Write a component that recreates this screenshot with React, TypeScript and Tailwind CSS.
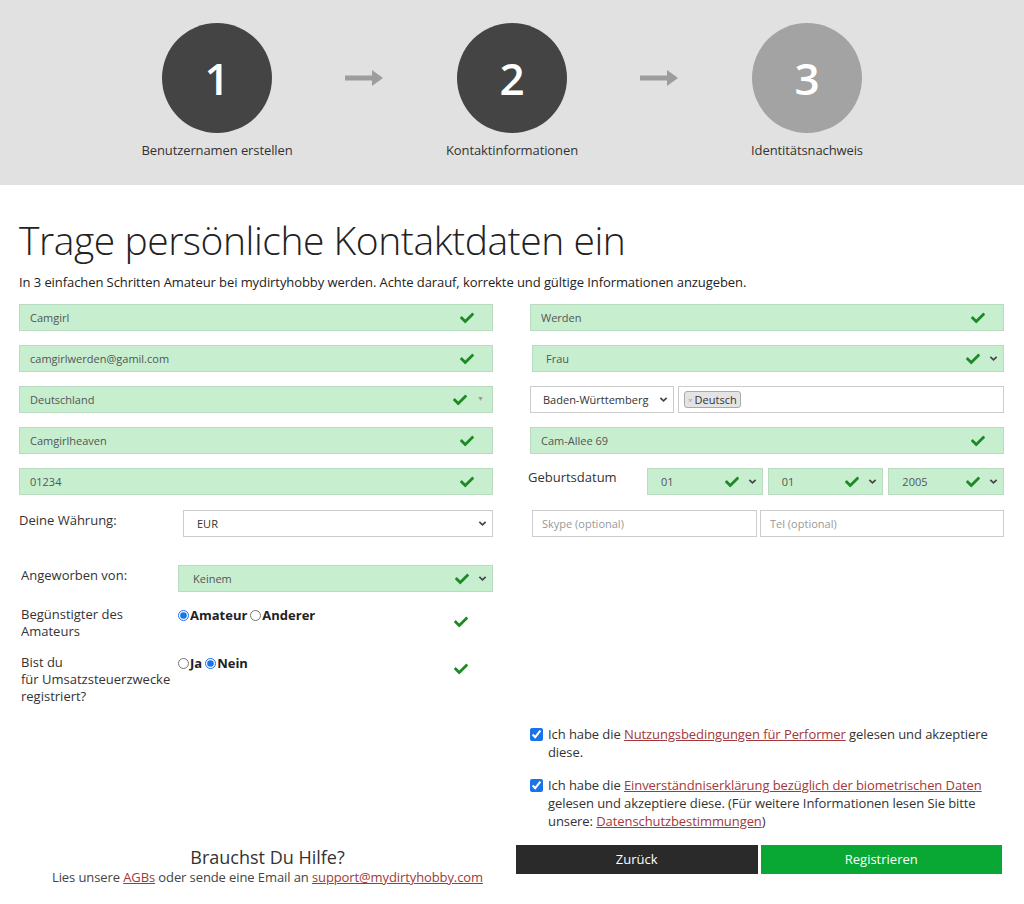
import React from 'react';

const Check = ({ className = '' }: { className?: string }) => (
  <svg viewBox="0 0 512 512" className={`w-[14px] h-[14px] ${className}`} fill="#1d8a24">
    <path d="M173.9 439.4 7.5 273c-10-10-10-26.2 0-36.2l36.2-36.2c10-10 26.2-10 36.2 0L192 312.7 432.1 72.6c10-10 26.2-10 36.2 0l36.2 36.2c10 10 10 26.2 0 36.2L210.1 439.4c-10 10-26.2 10-36.2 0z" />
  </svg>
);

const Chevron = ({ className = '' }: { className?: string }) => (
  <svg viewBox="0 0 10 10" className={`w-[9px] h-[9px] ${className}`} fill="none" stroke="#444" strokeWidth={1.8}>
    <path d="M1.5 3.2 5 6.6 8.5 3.2" />
  </svg>
);

const Arrow = () => (
  <svg width="40" height="18" viewBox="0 0 40 18">
    <rect x="0" y="6.5" width="28" height="5" fill="#9d9d9d" />
    <path d="M27 1 38 9 27 17z" fill="#9d9d9d" />
  </svg>
);

type FieldProps = {
  value: string;
  chevron?: boolean;
  triangle?: boolean;
  className?: string;
  pad?: string;
};

// green "valid" field
const Field: React.FC<FieldProps> = ({ value, chevron, triangle, className = '', pad = 'pl-[10px]' }) => (
  <div
    className={`h-[27px] bg-[#c6eecf] border border-[#b9dcc0] flex items-center ${pad} text-[11px] text-[#555] ${className}`}
  >
    <span className="flex-1 truncate pt-[1px]">{value}</span>
    <Check />
    {chevron ? (
      <Chevron className="ml-[9px] mr-[5px]" />
    ) : triangle ? (
      <span className="ml-[10px] mr-[8px] text-[7px] text-[#999]">▼</span>
    ) : (
      <span className="w-[18px]" />
    )}
  </div>
);

const Step = ({ n, label, light }: { n: string; label: string; light?: boolean }) => (
  <div className="w-[200px] flex flex-col items-center">
    <div
      className={`w-[110px] h-[110px] rounded-full flex items-center justify-center text-white text-[44px] font-semibold ${
        light ? 'bg-[#a3a3a3]' : 'bg-[#444444]'
      }`}
    >
      {n}
    </div>
    <div className="mt-[8px] text-[13px] tracking-[-0.1px] text-[#333]">{label}</div>
  </div>
);

const Link = ({ children }: { children: React.ReactNode }) => (
  <a href="#" className="text-[#a3383a] underline">
    {children}
  </a>
);

const Radio = ({ checked }: { checked?: boolean }) => (
  <input type="radio" checked={!!checked} readOnly className="w-[11px] h-[11px] m-0 accent-[#1a73e8]" />
);

export default function App() {
  return (
    <div className="w-[1024px] min-h-[904px] bg-white text-[#333]" style={{ fontFamily: '"Open Sans", "Noto Sans", sans-serif' }}>
      {/* STEPS */}
      <div className="h-[185px] bg-[#e1e1e1] flex justify-center pt-[23px]">
        <Step n="1" label="Benutzernamen erstellen" />
        <div className="w-[95px] h-[110px] flex items-center justify-center">
          <Arrow />
        </div>
        <Step n="2" label="Kontaktinformationen" />
        <div className="w-[95px] h-[110px] flex items-center justify-center">
          <Arrow />
        </div>
        <Step n="3" label="Identitätsnachweis" light />
      </div>

      {/* TITLE */}
      <div className="px-[19px]">
        <h1 className="mt-[31px] text-[39px] leading-[48px] font-light text-[#222] tracking-[-0.45px]">
          Trage persönliche Kontaktdaten ein
        </h1>
        <p className="mt-[9px] text-[13px] leading-[18px] text-[#222] tracking-[-0.08px]">
          In 3 einfachen Schritten Amateur bei mydirtyhobby werden. Achte darauf, korrekte und gültige Informationen anzugeben.
        </p>
      </div>

      {/* FORM */}
      <div className="mt-[13px] px-[19px] grid grid-cols-[474px_474px] gap-x-[37px]">
        {/* left column */}
        <div className="flex flex-col">
          <div className="flex flex-col gap-[14px]">
            <Field value="Camgirl" />
            <Field value="camgirlwerden@gamil.com" />
            <Field value="Deutschland" triangle />
            <Field value="Camgirlheaven" />
            <Field value="01234" />
          </div>

          <div className="mt-[15px] flex">
            <div className="w-[164px] pt-[1px] text-[13px] leading-[18px]">Deine Währung:</div>
            <div className="flex-1 h-[27px] border border-[#ccc] flex items-center pl-[13px] text-[11px] text-[#333]">
              <span className="flex-1 pt-[1px]">EUR</span>
              <Chevron className="mr-[5px]" />
            </div>
          </div>

          <div className="mt-[28px] flex">
            <div className="w-[159px] pl-[2px] pt-[1px] text-[13px] leading-[18px]">Angeworben von:</div>
            <Field value="Keinem" chevron className="flex-1" pad="pl-[14px]" />
          </div>

          <div className="mt-[14px] flex">
            <div className="w-[159px] pl-[2px] text-[13px] leading-[17px]">
              Begünstigter des
              <br />
              Amateurs
            </div>
            <div className="flex-1 flex items-start">
              <label className="flex items-center gap-[1px] text-[13px] font-bold text-[#222] leading-[18px]">
                <Radio checked />
                Amateur
              </label>
              <label className="ml-[3px] flex items-center gap-[1px] text-[13px] font-bold text-[#222] leading-[18px]">
                <Radio />
                Anderer
              </label>
              <span className="flex-1" />
              <Check className="mt-[9px] mr-[25px]" />
            </div>
          </div>

          <div className="mt-[14px] flex">
            <div className="w-[159px] pl-[2px] text-[13px] leading-[17px]">
              Bist du
              <br />
              für Umsatzsteuerzwecke
              <br />
              registriert?
            </div>
            <div className="flex-1 flex items-start">
              <label className="flex items-center gap-[1px] text-[13px] font-bold text-[#222] leading-[18px]">
                <Radio />
                Ja
              </label>
              <label className="ml-[3px] flex items-center gap-[1px] text-[13px] font-bold text-[#222] leading-[18px]">
                <Radio checked />
                Nein
              </label>
              <span className="flex-1" />
              <Check className="mt-[8px] mr-[25px]" />
            </div>
          </div>
        </div>

        {/* right column */}
        <div className="flex flex-col">
          <div className="flex flex-col gap-[14px]">
            <Field value="Werden" />
            <Field value="Frau" chevron className="ml-[2px]" pad="pl-[13px]" />
            <div className="flex gap-[4px] h-[27px]">
              <div className="w-[144px] border border-[#ccc] flex items-center pl-[12px] text-[11px] text-[#333]">
                <span className="flex-1 pt-[1px]">Baden-Württemberg</span>
                <Chevron className="mr-[5px]" />
              </div>
              <div className="flex-1 border border-[#ccc] flex items-center pl-[5px]">
                <span className="h-[17px] px-[3px] rounded-[3px] bg-[#e4e4e4] border border-[#aaa] flex items-center text-[11px] text-[#333] leading-none">
                  <span className="text-[8px] text-[#999] mr-[2px]">×</span>Deutsch
                </span>
              </div>
            </div>
            <Field value="Cam-Allee 69" />
            <div className="flex h-[27px]">
              <div className="w-[119px] -ml-[2px] text-[13px] leading-[18px]">Geburtsdatum</div>
              <div className="flex-1 flex gap-[5px]">
                <Field value="01" chevron className="flex-1" pad="pl-[13px]" />
                <Field value="01" chevron className="flex-1" pad="pl-[13px]" />
                <Field value="2005" chevron className="flex-1" pad="pl-[13px]" />
              </div>
            </div>
          </div>

          <div className="mt-[15px] ml-[2px] flex gap-[3px]">
            <div className="w-[225px] h-[27px] border border-[#ccc] flex items-center pl-[9px] pt-[1px] text-[11px] text-[#999]">
              Skype (optional)
            </div>
            <div className="flex-1 h-[27px] border border-[#ccc] flex items-center pl-[9px] pt-[1px] text-[11px] text-[#999]">
              Tel (optional)
            </div>
          </div>

          <div className="mt-[188px] flex flex-col gap-[15px] text-[13px] leading-[18px] text-[#333] tracking-[-0.08px]">
            <div className="flex items-start">
              <input type="checkbox" checked readOnly className="mt-[3px] w-[13px] h-[13px] m-0 accent-[#1a73e8]" />
              <p className="ml-[5px] pr-[10px]">
                Ich habe die <Link>Nutzungsbedingungen für Performer</Link> gelesen und akzeptiere diese.
              </p>
            </div>
            <div className="flex items-start">
              <input type="checkbox" checked readOnly className="mt-[3px] w-[13px] h-[13px] m-0 accent-[#1a73e8]" />
              <p className="ml-[5px] pr-[10px]">
                Ich habe die <Link>Einverständniserklärung bezüglich der biometrischen Daten</Link> gelesen und akzeptiere
                diese. (Für weitere Informationen lesen Sie bitte unsere: <Link>Datenschutzbestimmungen</Link>)
              </p>
            </div>
          </div>
        </div>
      </div>

      {/* BOTTOM */}
      <div className="mt-[15px] flex">
        <div className="w-[516px] pl-[19px] pt-[1px] flex flex-col items-center">
          <div className="text-[18px] leading-[22px] text-[#333]">Brauchst Du Hilfe?</div>
          <div className="text-[13px] leading-[18px] text-[#444] tracking-[-0.1px]">
            Lies unsere <Link>AGBs</Link> oder sende eine Email an <Link>support@mydirtyhobby.com</Link>
          </div>
        </div>
        <div className="w-[486px] flex gap-[3px]">
          <button className="flex-1 h-[29px] bg-[#2a2a2a] text-white text-[13px]">Zurück</button>
          <button className="flex-1 h-[29px] bg-[#09a733] text-white text-[13px]">Registrieren</button>
        </div>
      </div>
    </div>
  );
}
